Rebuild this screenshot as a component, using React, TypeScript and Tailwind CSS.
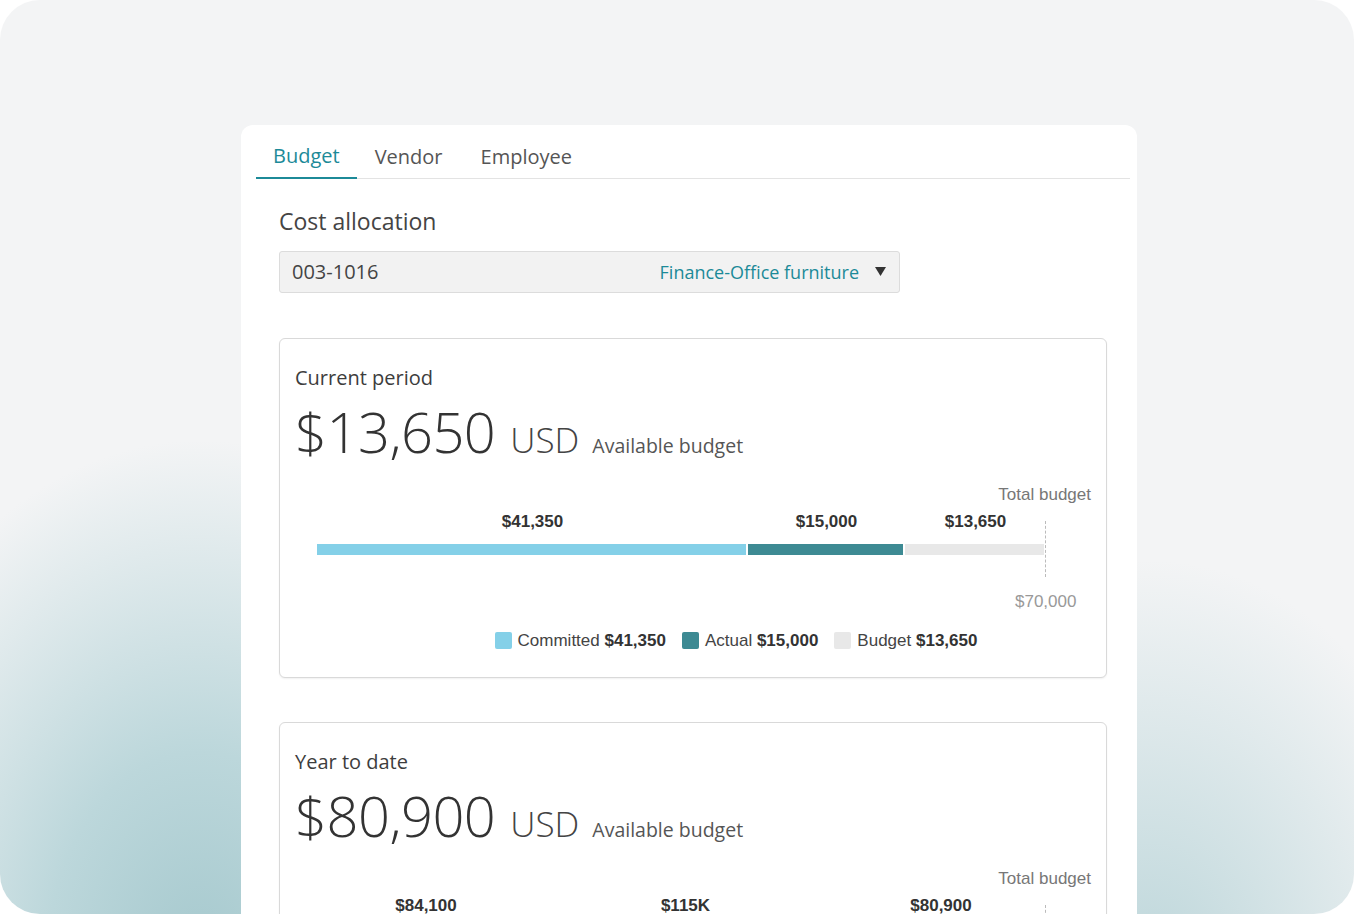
import React from "react";

const ui = "font-['Open_Sans','Noto_Sans',sans-serif]";
const chartFont = "font-['Liberation_Sans',Arial,sans-serif]";

type Segment = { label: string; width: number; color: string };

function Card({
  title,
  amount,
  segments,
  total,
  legend,
}: {
  title: string;
  amount: string;
  segments: Segment[];
  total: string;
  legend?: { color: string; name: string; value: string }[];
}) {
  return (
    <div className="rounded-[6px] border border-[#d9d9d9] bg-white px-[15px] pt-[29px] pb-[28px] shadow-[0_1px_2px_rgba(0,0,0,0.06)]">
      <div className={`${ui} text-[20px] leading-none text-[#3d3d3d]`}>{title}</div>
      <div className={`${ui} mt-[15px] flex items-baseline text-[#333]`}>
        <span className="text-[56px] font-light leading-none tracking-[-0.5px]">{amount}</span>
        <span className="ml-[15px] text-[35px] font-light leading-none text-[#444]">USD</span>
        <span className="ml-[13px] text-[19.5px] leading-none text-[#555]">Available budget</span>
      </div>

      <div className={`${chartFont} relative mt-[27px] h-[135px]`}>
        <div className="flex justify-end text-[17px] leading-none text-[#777]">Total budget</div>
        <div className="ml-[22px] mt-[10px] flex w-[729px] text-[17px] font-bold leading-none text-[#333]">
          {segments.map((s) => (
            <div key={s.label} className="text-center" style={{ width: s.width }}>
              {s.label}
            </div>
          ))}
        </div>
        <div className="ml-[22px] mt-[14px] flex h-[11px] w-[729px] gap-[2px]">
          {segments.map((s) => (
            <div key={s.label} className={s.color} style={{ width: s.width - 2 }} />
          ))}
        </div>
        <div className="absolute left-[750px] top-[35px] h-[56px] border-l border-dashed border-[#bbb]" />
        <div className="absolute left-[720px] top-[107px] text-[17px] leading-none text-[#999]">{total}</div>
      </div>

      {legend && (
        <div className={`${chartFont} mt-[11px] flex justify-center gap-[16px] pl-[86px] text-[17px] leading-none text-[#444]`}>
          {legend.map((l) => (
            <div key={l.name} className="flex items-center gap-[6px]">
              <span className={`h-[17px] w-[17px] rounded-[2px] ${l.color}`} />
              <span>
                {l.name} <b className="text-[#333]">{l.value}</b>
              </span>
            </div>
          ))}
        </div>
      )}
    </div>
  );
}

export default function App() {
  return (
    <div className="h-[914px] w-[1354px] overflow-hidden bg-white">
      <div className="h-full w-full overflow-hidden rounded-[40px] bg-[#f3f4f5] bg-[radial-gradient(ellipse_380px_520px_at_200px_960px,#a6c9ce_0%,#bcd7db_40%,rgba(243,244,245,0)_100%),radial-gradient(ellipse_320px_420px_at_1150px_980px,#bcd6da_0%,rgba(243,244,245,0)_100%)] pt-[125px]">
        <div className="ml-[241px] h-[800px] w-[896px] rounded-t-[12px] bg-white pt-[10px]">
          {/* Tabs */}
          <div className={`${ui} mx-[15px] mr-[7px] flex border-b border-[#e3e3e3] text-[20px]`}>
            <div className="-mb-px border-b-2 border-[#1c8a98] px-[17px] pb-[6px] pt-[6px] text-[#1c8a98]">Budget</div>
            <div className="px-[18px] pb-[6px] pt-[7px] text-[#555]">Vendor</div>
            <div className="px-[20px] pb-[6px] pt-[7px] text-[#555]">Employee</div>
          </div>

          <div className="pl-[38px] pr-[30px]">
            <div className={`${ui} mt-[31px] text-[23px] leading-none text-[#444]`}>Cost allocation</div>

            <div className={`${ui} mt-[18px] flex h-[42px] w-[621px] items-center rounded-[3px] border border-[#dcdcdc] bg-[#f2f2f2] pl-[12px] pr-[13px]`}>
              <span className="text-[20px] text-[#444]">003-1016</span>
              <span className="ml-auto text-[18px] text-[#1c8a98]">Finance-Office furniture</span>
              <svg className="ml-[16px]" width="11" height="10" viewBox="0 0 11 10">
                <path d="M0 0 H11 L5.5 9 Z" fill="#333" />
              </svg>
            </div>

            <div className="mt-[45px] flex flex-col gap-[44px]">
              <Card
                title="Current period"
                amount="$13,650"
                total="$70,000"
                segments={[
                  { label: "$41,350", width: 431, color: "bg-[#84d0e8]" },
                  { label: "$15,000", width: 157, color: "bg-[#3d8a93]" },
                  { label: "$13,650", width: 141, color: "bg-[#e8e8e8]" },
                ]}
                legend={[
                  { color: "bg-[#84d0e8]", name: "Committed", value: "$41,350" },
                  { color: "bg-[#3d8a93]", name: "Actual", value: "$15,000" },
                  { color: "bg-[#e8e8e8]", name: "Budget", value: "$13,650" },
                ]}
              />
              <Card
                title="Year to date"
                amount="$80,900"
                total="$280,000"
                segments={[
                  { label: "$84,100", width: 218, color: "bg-[#84d0e8]" },
                  { label: "$115K", width: 301, color: "bg-[#3d8a93]" },
                  { label: "$80,900", width: 210, color: "bg-[#e8e8e8]" },
                ]}
              />
            </div>
          </div>
        </div>
      </div>
    </div>
  );
}
